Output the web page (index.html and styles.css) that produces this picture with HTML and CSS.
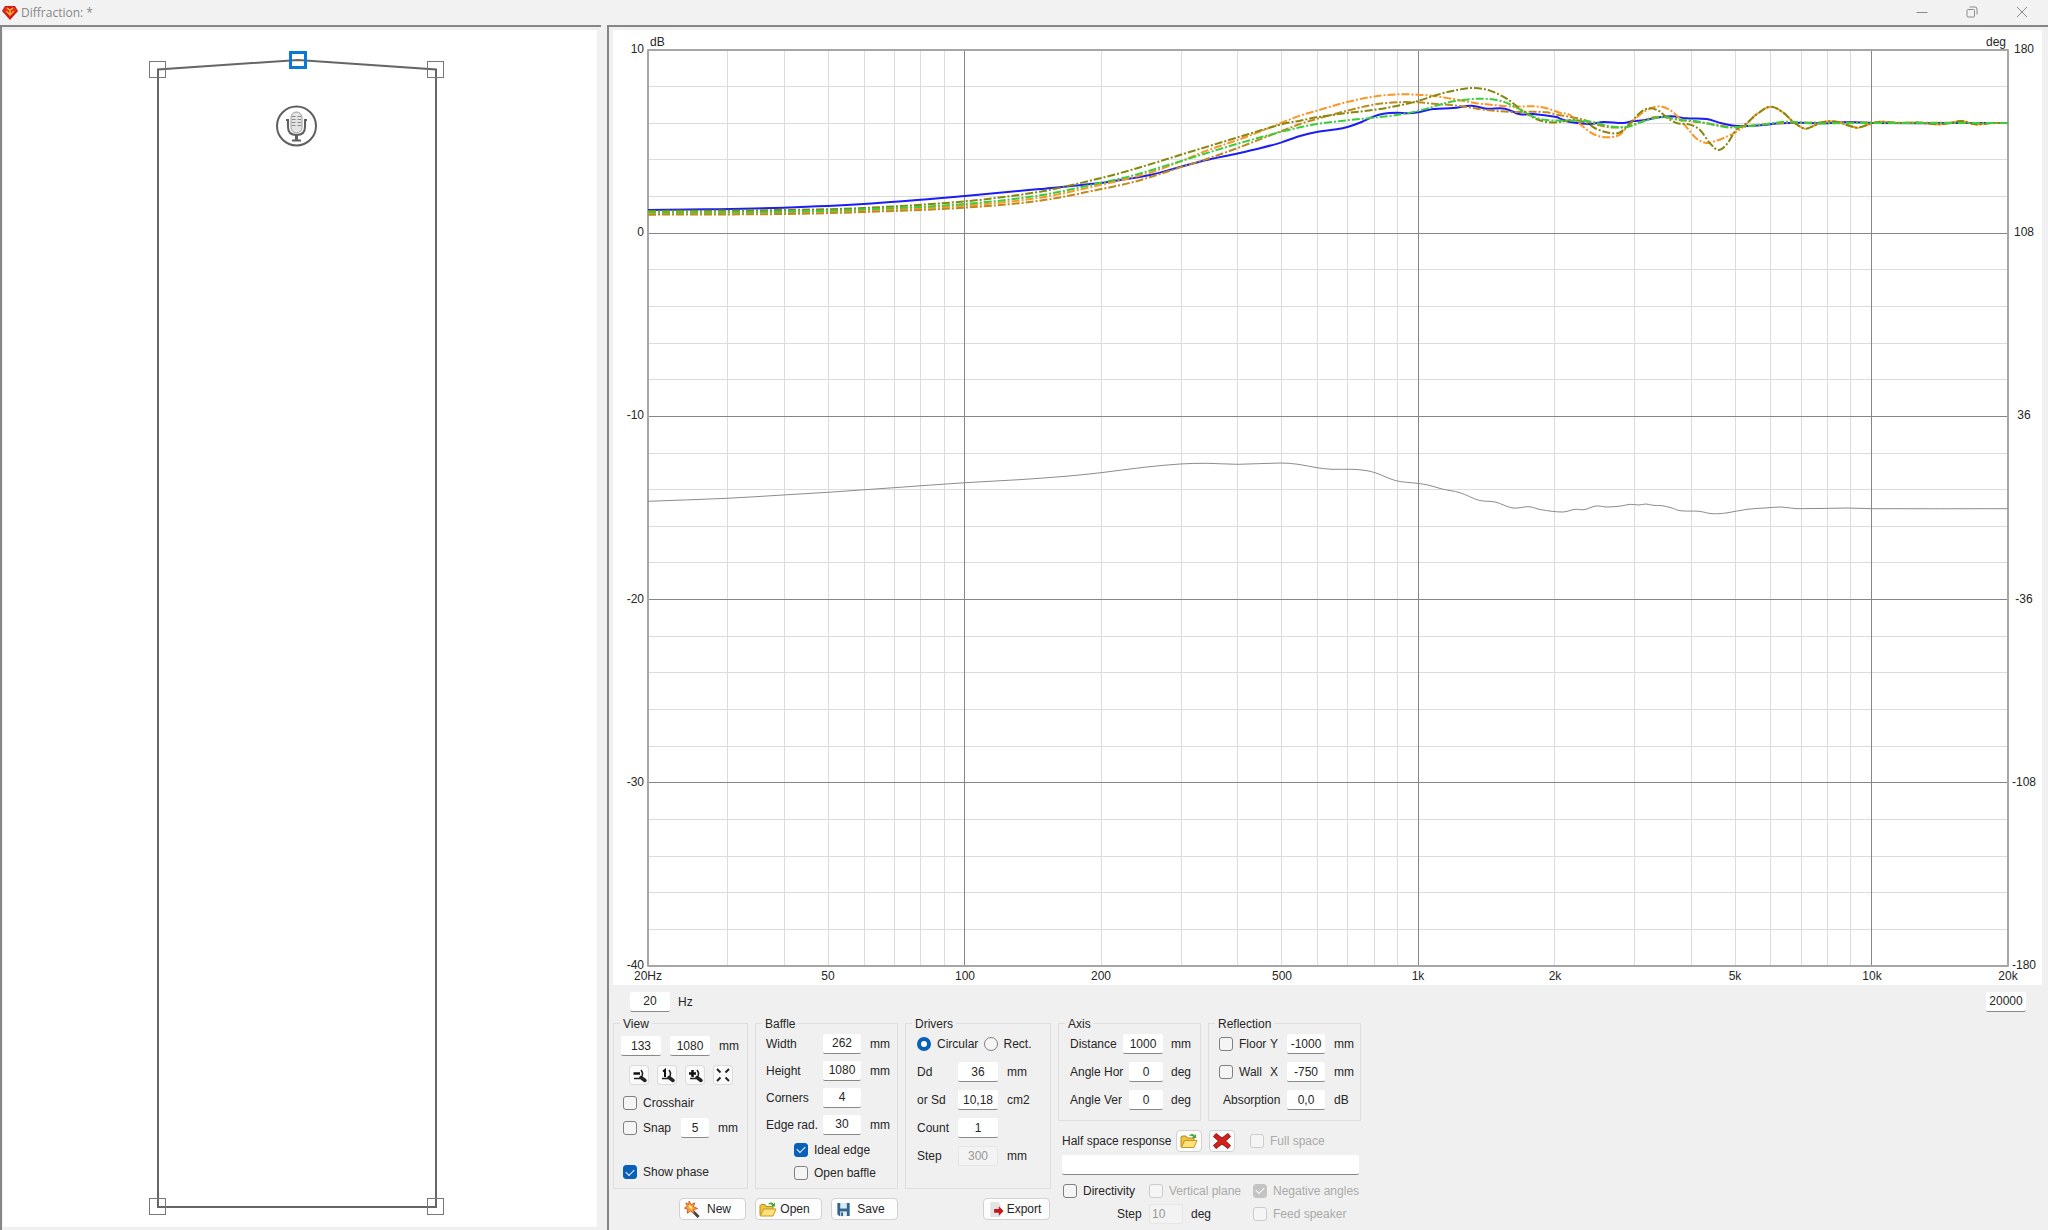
FILE: index.html
```html
<!DOCTYPE html>
<html lang="en">
<head>
<meta charset="utf-8">
<title>Diffraction</title>
<link rel="stylesheet" href="styles.css">
</head>
<body>
<svg class="defs" aria-hidden="true">
  <symbol id="folder" viewBox="0 0 18 16">
    <path d="M1 14V4l1-1h4l1 2h7v3" fill="#f0c43c" stroke="#b98a1c"/>
    <path d="M1.500 14.500 4.500 7.500h12.500l-3 7z" fill="#fde27a" stroke="#c4962a"/>
    <path d="M9 3c2-2.500 4-2.500 5.500-.5L16 1v4h-4l1.200-1.200C12 2.500 11 2.500 9 3z" fill="#3faa35"/>
  </symbol>
  <symbol id="lens" viewBox="0 0 18 18">
    <path d="M11 4c2 2.500 2 5 0 7.500M4 12.500h6" fill="none" stroke="#222" stroke-width="1.500"/>
    <path d="M11 11.500l4 3" stroke="#222" stroke-width="3.500" stroke-linecap="round"/>
  </symbol>
</svg>
<header class="titlebar">
  <svg class="gem" viewBox="0 0 16 14"><path d="M3 0h10l3 5-8 9-8-9z" fill="#d3161a"/><path d="M3 1h3l2 3 2-3h3l2 4-4 1-3 6-3-6-4-1z" fill="#e02a1c"/><path d="M5 2l3 2 3-2M4 5l4 4 4-4M8 4v4" fill="none" stroke="#f3b12c" stroke-width="1.500"/></svg>
  <h1>Diffraction: *</h1>
  <div class="window-buttons">
    <button aria-label="Minimize"><svg viewBox="0 0 12 12"><path d="M0.500 6.500h11"/></svg></button>
    <button aria-label="Restore"><svg viewBox="0 0 12 12"><rect x="1" y="3.500" width="7.500" height="7.500" rx="1"/><path d="M3.500 1h5.500q2 0 2 2v5.500"/></svg></button>
    <button aria-label="Close"><svg viewBox="0 0 12 12"><path d="M1 1l10 10M11 1 1 11"/></svg></button>
  </div>
</header>
<main>
  <section class="pane baffle-pane">
    <svg class="baffle" viewBox="0 0 594 1197" preserveAspectRatio="xMidYMin meet">
      <path class="outline" d="M155 1177V39.500L295 30l138 9.500V1177z"/>
      <g class="handle">
        <rect x="146.500" y="31.500" width="16" height="16"/><rect x="424.500" y="31.500" width="16" height="16"/>
        <rect x="146.500" y="1168.500" width="16" height="16"/><rect x="424.500" y="1168.500" width="16" height="16"/>
      </g>
      <rect class="selected" x="287.500" y="22.500" width="15" height="15"/>
      <g fill="none" stroke="#5f5f5f">
        <circle cx="293.500" cy="96" r="19.500" stroke-width="2"/>
        <rect x="288" y="82" width="11" height="21" rx="5.500" fill="#e4e4e4" stroke="#999"/>
        <path d="M289 86.500h3.500M294.500 86.500h3.500M289 89.500h3.500M294.500 89.500h3.500M289 92.500h3.500M294.500 92.500h3.500M289 95.500h3.500M294.500 95.500h3.500" stroke="#888"/>
        <path d="M285 89v8q0 8 8.500 8t8.500-8v-8" stroke-width="2"/>
        <path d="M283 90h3M301 90h3M289 110.500h9" stroke-width="2"/>
        <path d="M293.500 105v5" stroke-width="3"/>
      </g>
    </svg>
  </section>
  <section class="pane">
    <svg class="chart" id="chart" viewBox="613 30 1429 955"></svg>
    <div class="range">
      <div class="field"><input id="fmin" value="20" class="w40"><label for="fmin">Hz</label></div>
      <input class="w40" aria-label="Maximum frequency" value="20000">
    </div>
    <div class="controls">
      <div class="left">
        <div class="groups">
          <fieldset class="view tall"><legend>View</legend>
            <div class="body">
              <div class="row size"><input class="w40" aria-label="View width" value="133"><input class="w40" aria-label="View height" value="1080"><span>mm</span></div>
              <div class="row tools">
                <button aria-label="Zoom out"><svg viewBox="0 0 18 18"><use href="#lens"/><path d="M3.500 7.500h6.500" stroke="#111" stroke-width="2.500"/></svg></button>
                <button aria-label="Zoom 1:1"><svg viewBox="0 0 18 18"><use href="#lens"/><path d="M5 5.500 7 4v7" fill="none" stroke="#111" stroke-width="2"/></svg></button>
                <button aria-label="Zoom in"><svg viewBox="0 0 18 18"><use href="#lens"/><path d="M3 7.500h7M6.500 4v7" stroke="#111" stroke-width="2.500"/></svg></button>
                <button aria-label="Fit"><svg viewBox="0 0 18 18"><path d="M3 3l3.500 3.500M15 3l-3.500 3.500M3 15l3.500-3.500M15 15l-3.500-3.500" stroke="#222" stroke-width="2"/></svg></button>
              </div>
              <div class="row cross"><label><input type="checkbox">Crosshair</label></div>
              <div class="row snap"><label><input type="checkbox">Snap</label><input class="w28" aria-label="Snap step" value="5"><span>mm</span></div>
              <div class="row phase"><label><input type="checkbox" checked>Show phase</label></div>
            </div>
          </fieldset>
          <fieldset class="baf tall"><legend>Baffle</legend>
            <div class="body">
              <div class="row"><label for="bw">Width</label><input id="bw" class="w38" value="262"><span>mm</span></div>
              <div class="row"><label for="bh">Height</label><input id="bh" class="w38" value="1080"><span>mm</span></div>
              <div class="row"><label for="bc">Corners</label><input id="bc" class="w38" value="4"></div>
              <div class="row"><label for="be">Edge rad.</label><input id="be" class="w38" value="30"><span>mm</span></div>
              <div class="row check"><label><input type="checkbox" checked>Ideal edge</label></div>
              <div class="row check"><label><input type="checkbox">Open baffle</label></div>
            </div>
          </fieldset>
          <fieldset class="drv tall"><legend>Drivers</legend>
            <div class="body">
              <div class="row shape"><label><input type="radio" name="shape" checked>Circular</label><label><input type="radio" name="shape">Rect.</label></div>
              <div class="row"><label for="dd">Dd</label><input id="dd" class="w40" value="36"><span>mm</span></div>
              <div class="row"><label for="sd">or Sd</label><input id="sd" class="w40" value="10,18"><span>cm2</span></div>
              <div class="row"><label for="dc">Count</label><input id="dc" class="w40" value="1"></div>
              <div class="row"><label for="ds">Step</label><input id="ds" class="w40" value="300" disabled><span>mm</span></div>
            </div>
          </fieldset>
        </div>
        <div class="files">
          <button><svg viewBox="0 0 18 18"><path d="M7 8l9 9" stroke="#444" stroke-width="3"/><path d="M6 0l2 4 4-2-1.500 4L15 8l-4 1 0 4-3.500-2.500L4 13l.5-4L1 7.500l3-2L2.500 2 5.500 3.500z" fill="#f6a53a" stroke="#d4572a"/><path d="M6 5l3 3" stroke="#fff19c" stroke-width="2"/></svg><span>New</span></button>
          <button><svg viewBox="0 0 18 16"><use href="#folder"/></svg><span>Open</span></button>
          <button><svg viewBox="0 0 18 18"><path d="M2 2h13v14H4l-2-2z" fill="#2f6690"/><path d="M5 2h7v6H5z" fill="#dce9f3"/><path d="M5 11h7v5H5z" fill="#e8eef2"/><path d="M6 12h2v4H6z" fill="#2f6690"/></svg><span>Save</span></button>
          <button class="export"><svg viewBox="0 0 18 18"><path d="M3 1h8l3 3v13H3z" fill="#e3e3e3"/><path d="M7 8.500h5V5.500l5 5-5 5v-3H7z" fill="#c4161c"/></svg><span>Export</span></button>
        </div>
      </div>
      <div class="right">
        <div class="groups">
          <fieldset class="axis"><legend>Axis</legend>
            <div class="body">
              <div class="row"><label for="ad">Distance</label><input id="ad" class="w40" value="1000"><span>mm</span></div>
              <div class="row"><label for="ah">Angle Hor</label><input id="ah" class="w34" value="0"><span>deg</span></div>
              <div class="row"><label for="av">Angle Ver</label><input id="av" class="w34" value="0"><span>deg</span></div>
            </div>
          </fieldset>
          <fieldset class="refl"><legend>Reflection</legend>
            <div class="body">
              <div class="row"><label><input type="checkbox">Floor</label><span class="dim">Y</span><input class="w38" aria-label="Floor Y" value="-1000"><span>mm</span></div>
              <div class="row"><label><input type="checkbox">Wall</label><span class="dim">X</span><input class="w38" aria-label="Wall X" value="-750"><span>mm</span></div>
              <div class="row"><label for="ab" class="indent">Absorption</label><input id="ab" class="w38" value="0,0"><span>dB</span></div>
            </div>
          </fieldset>
        </div>
        <div class="half">
          <label for="hs">Half space response</label>
          <button aria-label="Open response"><svg viewBox="0 0 18 16"><use href="#folder"/></svg></button>
          <button aria-label="Clear response"><svg viewBox="0 0 18 16"><path d="M3 0.500 9 5l6-4.500 2.500 3L12.500 8l5 4.500-2.500 3L9 11l-6 4.500-2.500-3L5.500 8l-5-4.500z" fill="#d3211d" stroke="#971310"/></svg></button>
          <label class="off"><input type="checkbox" disabled>Full space</label>
        </div>
        <input id="hs" class="response">
        <div class="direct">
          <label><input type="checkbox">Directivity</label>
          <label class="off"><input type="checkbox" disabled>Vertical plane</label>
          <label class="off"><input type="checkbox" checked disabled>Negative angles</label>
          <div class="step"><label for="st">Step</label><input id="st" class="w34" value="10" disabled><span>deg</span></div>
          <label class="off"><input type="checkbox" disabled>Feed speaker</label>
        </div>
      </div>
    </div>
  </section>
</main>
<script src="chart.js"></script>
</body>
</html>
```
FILE: styles.css
```css
* { box-sizing: border-box; }
body { margin: 0; min-height: 100vh; display: flex; flex-direction: column; background: #f0f0f0; color: #262626; font: 12px/14px "Liberation Sans", Arial, sans-serif; }
.defs { position: absolute; width: 0; height: 0; }
svg { display: block; }
button, input { font: inherit; color: inherit; }

.titlebar { display: flex; align-items: center; height: 25px; padding: 0 2px; background: #f2f2f2; }
.titlebar h1 { margin: 0 0 0 3px; font: 12px/16px "Open Sans", "Noto Sans", sans-serif; color: #888; }
.gem { width: 16px; height: 14px; }
.window-buttons { margin-left: auto; display: flex; gap: 2px; }
.window-buttons button { width: 48px; height: 24px; padding: 5px 18px 7px; border: 0; background: none; }
.window-buttons svg { width: 12px; height: 12px; fill: none; stroke: #8b8b8b; }

main { flex: 1; display: grid; grid-template-columns: 601fr 1441fr; gap: 6px; padding-bottom: 1px; border-bottom: 1px solid #bbb; }
.pane { border-top: 2px solid #868686; border-left: 2px solid #868686; padding: 3px 0 0 4px; min-width: 0; }
.baffle-pane { padding: 3px 4px 3px 1px; }
.baffle { width: 100%; height: 100%; background: #fff; }
.outline { fill: none; stroke: #666; stroke-width: 2; }
.handle rect { fill: none; stroke: #777; }
.selected { fill: none; stroke: #0a78d6; stroke-width: 3; }

.chart { width: calc(100% - 6px); height: auto; background: #fff; font-size: 12px; fill: #262626; }
.chart path { fill: none; stroke-width: 2; stroke-linejoin: round; }
.chart .minor { stroke: #dcdcdc; stroke-width: 1; shape-rendering: crispEdges; }
.chart .major { stroke: #868686; stroke-width: 1; shape-rendering: crispEdges; }
.chart .frame { stroke: #a6a6a6; }
.chart .phase { stroke: #8c8c8c; stroke-width: 1; }
.chart .dash { stroke-dasharray: 8 2 2 2; }
.chart .mid { text-anchor: middle; }
.chart .end { text-anchor: end; }

.range { display: flex; justify-content: space-between; align-items: center; height: 31px; padding: 2px 22px 0 17px; }
.field, .row, .half { display: flex; align-items: center; }
.field { gap: 8px; }
.controls { display: flex; gap: 7px; align-items: flex-start; }
.groups { display: flex; gap: 7px; align-items: flex-start; }

input:not([type]) { height: 20px; padding: 0; border: 0; border-bottom: 1px solid #888; border-radius: 2px; background: #fff; text-align: center; flex: none; }
input:not([type]):disabled { background: #f3f3f3; border: 1px solid #e6e6e6; color: #999; }
.w28 { width: 28px; }
.w34 { width: 34px; }
.w38 { width: 38px; }
.w40 { width: 40px; }
label:has(input) { display: flex; align-items: center; gap: 6px; white-space: nowrap; }
.off { color: #aaa; }
[type=checkbox], [type=radio] { appearance: none; width: 14px; height: 14px; margin: 0; border: 1px solid #808080; border-radius: 3px; background: #f5f5f5; flex: none; }
[type=radio] { border-radius: 50%; }
[type=checkbox]:checked { border-color: #0a5fb8; background: #0a5fb8; display: grid; place-items: center; }
[type=checkbox]:checked::before { content: ""; width: 7px; height: 4px; border: solid #fff; border-width: 0 0 1px 1px; transform: translateY(-1px) rotate(-45deg); }
[type=radio]:checked { border: 4px solid #0a5fb8; background: #fff; }
[type=checkbox]:disabled { border-color: #ccc; }
[type=checkbox]:checked:disabled { background: #c4c4c4; border-color: #c4c4c4; }

fieldset { margin: 0; padding: 0; border: 1px solid #dedede; min-width: 0; }
legend { height: 14px; margin-left: 6px; padding: 0 3px; line-height: 16px; }
.body { display: flex; flex-direction: column; height: 90px; }
.tall .body { height: 158px; }
.row { height: 28px; flex: none; }
.row > span { margin-left: 9px; }

.view { width: 135px; }
.view .size { height: 32px; padding-left: 7px; gap: 9px; }
.view .size > span { margin-left: 0; }
.view .tools { height: 26px; padding-left: 16px; gap: 10px; }
.tools button { width: 18px; height: 18px; padding: 0; border: 0; box-shadow: 0 0 0 1px #dcdcdc; border-radius: 3px; background: #fafafa; }
.tools svg { width: 18px; height: 18px; }
.view .cross { height: 30px; padding-left: 9px; }
.view .snap { height: 20px; padding-left: 9px; }
.snap label { width: 58px; }
.view .phase { height: 32px; margin-top: auto; padding-left: 9px; }

.baf { width: 143px; }
.baf .row { height: 27px; padding-left: 10px; }
.baf .row > label { width: 57px; }
.baf .check { height: 23px; padding-left: 38px; }

.drv { width: 146px; }
.drv .row { padding-left: 11px; }
.drv .row > label { width: 41px; }
.drv .shape > label { width: 67px; }

.axis { width: 143px; }
.axis .row { padding-left: 11px; }
.axis .row > label { flex: 1; }
.axis .row > span { width: 37px; margin-left: 0; padding-left: 8px; }

.refl { width: 153px; }
.refl .row { padding-left: 10px; }
.refl .row > label { width: 51px; }
.refl .row > .dim { width: 17px; margin-left: 0; }
.refl .row > .indent { width: 68px; padding-left: 4px; }

.files { display: flex; gap: 9px; padding: 9px 1px 0 66px; }
.files button { display: flex; align-items: center; width: 67px; height: 22px; padding: 0 8px 0 3px; border: 1px solid #d2d2d2; border-radius: 4px; background: #fdfdfd; }
.files svg { width: 18px; height: 17px; flex: none; }
.files span { flex: 1; text-align: center; }
.files .export { margin-left: auto; padding-right: 6px; }

.half { padding: 9px 0 0 4px; }
.half > label:first-child { width: 114px; white-space: nowrap; }
.half button { width: 26px; height: 22px; margin-right: 7px; padding: 2px 3px; border: 1px solid #d2d2d2; border-radius: 4px; background: #fdfdfd; }
.half button svg { width: 18px; height: 16px; }
.half .off { margin-left: 8px; }
input.response:not([type]) { display: block; width: 297px; margin: 3px 0 0 4px; }
.direct { display: grid; grid-template-columns: 86px 104px auto; grid-template-rows: 23px 23px; align-items: center; padding: 4px 0 0 5px; }
.step { grid-column: 1 / 3; display: flex; align-items: center; padding-left: 54px; }
.step label { width: 32px; }
.step input:not([type]) { text-align: left; padding-left: 2px; }
.step span { margin-left: 8px; }
```
FILE: chart.js
```js
const NS = "http://www.w3.org/2000/svg";
const chart = document.getElementById("chart");
const L = 648, R = 2008, T = 50, B = 966;
const xOf = f => L + (R - L) * Math.log10(f / 20) / 3;
const yOf = db => T + (B - T) * (10 - db) / 50;

function add(tag, cls, attrs, text) {
  const el = document.createElementNS(NS, tag);
  el.setAttribute("class", cls);
  for (const k in attrs) el.setAttribute(k, attrs[k]);
  if (text !== undefined) el.textContent = text;
  chart.appendChild(el);
}

let minor = "", major = "";
for (let db = 8; db > -40; db -= 2) {
  const seg = `M${L} ${Math.floor(yOf(db)) + 0.5}H${R}`;
  if (db % 10) minor += seg; else major += seg;
}
for (const d of [10, 100, 1000, 10000])
  for (let k = 1; k < 10; k++) {
    const f = d * k;
    if (f <= 20 || f >= 20000) continue;
    const seg = `M${Math.floor(xOf(f)) + 0.5} ${T}V${B}`;
    if (k > 1) minor += seg; else major += seg;
  }
add("path", "minor", { d: minor });
add("path", "major", { d: major });
add("path", "frame", { d: `M${L} ${T}H${R}V${B}H${L}z` });

// Curve through a flat list of x, y pairs
function curve(p) {
  const n = p.length / 2, X = i => p[2 * Math.max(0, Math.min(n - 1, i))], Y = i => p[2 * Math.max(0, Math.min(n - 1, i)) + 1];
  let d = `M${X(0)} ${Y(0)}`;
  for (let i = 0; i < n - 1; i++) {
    const h = (X(i + 1) - X(i)) / 3;
    const s = j => (Y(j + 1) - Y(j - 1)) / ((X(j + 1) - X(j - 1)) || 1);
    d += `C${X(i) + h} ${Y(i) + h * s(i)} ${X(i + 1) - h} ${Y(i + 1) - h * s(i + 1)} ${X(i + 1)} ${Y(i + 1)}`;
  }
  return d;
}
// Low, mid and high bands are stored at a third of a unit, each from its own origin
function bands(low, mid, high) {
  const out = [];
  [[low, 640, 20], [mid, 1100, 70], [high, 1560, 80]].forEach(([a, ox, oy]) => {
    for (let i = 0; i < a.length; i += 2) out.push(ox + a[i] / 3, oy + a[i + 1] / 3);
  });
  return out;
}

add("path", "phase", { d: curve([648,501.3,727,498.3,783,495,828,492.3,894,487.7,965,482.7,1019,479.7,1069,476,1101,472.7,1144,467.3,1180,464,1207,463.3,1238,464.3,1281,463,1298,464.3,1317,467.7,1332,469.3,1353,469.3,1367,470.7,1376,473,1396,480.7,1417,483.3,1428,485,1442,489,1460,492.7,1479,500.3,1495,502,1513,508,1529,506.7,1541,509.7,1563,512,1575,509.3,1584,509.7,1596,506,1607,507,1621,506,1630,504.3,1639,505,1646,504,1653,505.3,1662,505.7,1671,507.7,1680,510.7,1699,511.3,1712,513.7,1726,513,1747,509.3,1765,508,1781,507,1797,508.7,1847,508,1871,508.7,2008,508.7]) });

const tail = [670,98,700,126,735,146,760,138,790,126,830,125,870,138,895,143,935,130,965,125,1010,129,1080,128,1135,133,1170,129,1205,123,1245,133,1300,129,1343,129];
const series = [
  ["#1c1cf5", "", [24,570,200,568,430,563,670,552,975,528,1200,507], [0,339,60,330,150,315,240,291,320,270,410,251,480,235,545,217,600,198,650,186,710,178,745,170,785,156,820,140,850,131,890,128,925,130,954,127,1000,117,1060,114,1115,107,1160,116,1215,116,1260,133,1300,132,1370,141], [0,116,30,126,90,132,130,126,190,129,220,123,250,121,290,113,335,109,380,115,440,117,485,130,530,138,600,136,660,130,720,128,780,130,870,126,935,129,1343,129]],
  ["#ff9526", "dash", [24,580,430,577,670,571,975,557,1200,533], [0,345,150,308,240,275,320,242,410,211,480,185,545,158,600,137,650,122,742,96,820,80,890,73,954,74,1000,78,1060,87,1120,98,1180,105,1240,110,1300,109,1340,115], [0,98,30,105,60,132,100,162,140,172,180,164,200,143,240,104,270,86,300,79,330,90,355,112,380,142,410,176,440,189,470,182,500,170,530,155,560,132,590,102,632,80,...tail]],
  ["#bd8a1e", "dash", [24,584,430,582,670,576,975,563,1200,542], [0,358,100,336,180,312,240,292,300,274,410,235,480,208,545,183,600,162,650,147,742,122,820,104,890,97,954,97,1000,101,1080,108,1150,119,1240,126,1300,125,1340,127], [0,106,60,116,100,130,150,142,200,140,240,127,280,112,320,112,360,120,420,127,470,135,520,142,570,138,620,132,700,128,1343,129]],
  ["#87870f", "dash", [24,573,430,570,670,564,975,544,1200,515], [0,325,100,298,240,255,410,203,545,163,600,152,650,142,742,129,820,120,890,108,954,93,1000,78,1060,62,1120,54,1170,62,1220,86,1260,116,1300,143,1340,156], [0,126,40,120,80,129,110,147,150,159,180,157,210,130,240,98,268,85,295,92,320,112,350,129,390,134,420,150,450,190,475,210,500,193,530,148,560,130,590,103,632,80,...tail]],
  ["#3ccc3c", "dash", [24,577,430,575,670,568,975,552,1200,526], [0,339,100,316,240,274,410,222,545,185,600,172,650,162,742,151,820,143,890,135,954,123,1000,110,1060,94,1140,86,1200,92,1240,108,1300,140,1340,150], [0,122,60,122,100,126,150,139,200,141,240,128,280,115,320,112,360,120,400,122,440,130,500,142,540,140,600,135,680,125,760,130,900,129,1343,129]]
];
for (const [color, cls, ...b] of series) add("path", cls, { stroke: color, d: curve(bands(...b)) });

for (let i = 0; i < 6; i++) {
  const y = Math.round(yOf(10 - 10 * i)) + 3;
  add("text", "end", { x: 644, y }, 10 - 10 * i);
  add("text", "mid", { x: 2024, y }, 180 - 72 * i);
}
add("text", "", { x: 650, y: 46 }, "dB");
add("text", "end", { x: 2006, y: 46 }, "deg");
[[20, "20Hz"], [50, "50"], [100, "100"], [200, "200"], [500, "500"], [1000, "1k"], [2000, "2k"], [5000, "5k"], [10000, "10k"], [20000, "20k"]]
  .forEach(([f, t]) => add("text", "mid", { x: Math.round(xOf(f)), y: 980 }, t));
```
